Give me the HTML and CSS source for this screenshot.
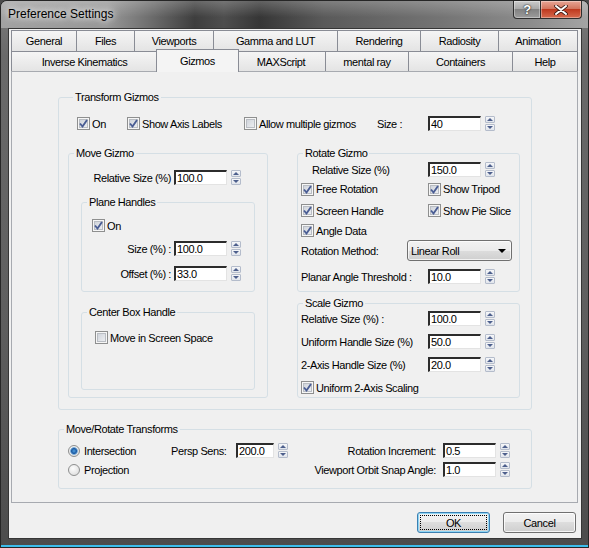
FILE: index.html
```html
<!DOCTYPE html>
<html lang="en">
<head>
    <meta charset="UTF-8">
    <meta name="viewport" content="width=device-width, initial-scale=1.0">
    <title>Preference Settings</title>
    <link rel="stylesheet" href="styles.css">
</head>
<body>
    <div class="window">
        <div class="titlebar">
            <span class="title">Preference Settings</span>
            <div class="caption-buttons">
                <span class="cap-btn help">?</span>
                <span class="cap-btn close">
                    <svg width="14" height="10" viewBox="0 0 14 10">
                        <path d="M2 1 L12 9 M12 1 L2 9" stroke="#3a1a14" stroke-width="3.6" stroke-linecap="round"/>
                        <path d="M2 1 L12 9 M12 1 L2 9" stroke="#fff" stroke-width="2" stroke-linecap="round"/>
                    </svg>
                </span>
            </div>
        </div>

        <div class="client">
            <div class="tabs">
                <div class="tab-row row1">
                    <div class="tab">General</div>
                    <div class="tab">Files</div>
                    <div class="tab">Viewports</div>
                    <div class="tab">Gamma and LUT</div>
                    <div class="tab">Rendering</div>
                    <div class="tab">Radiosity</div>
                    <div class="tab">Animation</div>
                </div>
                <div class="tab-row row2">
                    <div class="tab">Inverse Kinematics</div>
                    <div class="tab active">Gizmos</div>
                    <div class="tab">MAXScript</div>
                    <div class="tab">mental ray</div>
                    <div class="tab">Containers</div>
                    <div class="tab">Help</div>
                </div>
            </div>

            <div class="panel">
                <!-- Transform Gizmos -->
                <div class="group transform">
                    <div class="group-title">Transform Gizmos</div>
                    <div class="top-row">
                        <label class="check w-on"><span class="cb"><svg viewBox="0 0 11 11"><path d="M2 5.5 4.5 8.5 9 2"/></svg></span>On</label>
                        <label class="check w-axis"><span class="cb"><svg viewBox="0 0 11 11"><path d="M2 5.5 4.5 8.5 9 2"/></svg></span>Show Axis Labels</label>
                        <label class="check w-multi"><span class="cb"></span>Allow multiple gizmos</label>
                        <span class="size-label">Size :</span>
                        <span class="num">40</span>
                        <span class="spin"><i></i><i></i></span>
                    </div>

                    <div class="gizmo-cols">
                        <div class="group move">
                            <div class="group-title">Move Gizmo</div>
                            <div class="field">
                                <span class="lbl">Relative Size (%)</span>
                                <span class="num">100.0</span>
                                <span class="spin"><i></i><i></i></span>
                            </div>

                            <div class="group plane">
                                <div class="group-title">Plane Handles</div>
                                <label class="check"><span class="cb"><svg viewBox="0 0 11 11"><path d="M2 5.5 4.5 8.5 9 2"/></svg></span>On</label>
                                <div class="field">
                                    <span class="lbl">Size (%) :</span>
                                    <span class="num">100.0</span>
                                    <span class="spin"><i></i><i></i></span>
                                </div>
                                <div class="field">
                                    <span class="lbl">Offset (%) :</span>
                                    <span class="num">33.0</span>
                                    <span class="spin"><i></i><i></i></span>
                                </div>
                            </div>

                            <div class="group center-box">
                                <div class="group-title">Center Box Handle</div>
                                <label class="check"><span class="cb"></span>Move in Screen Space</label>
                            </div>
                        </div>

                        <div class="right-col">
                            <div class="group rotate">
                                <div class="group-title">Rotate Gizmo</div>
                                <div class="grid">
                                    <span class="lbl indent">Relative Size (%)</span>
                                    <span class="inp"><span class="num">150.0</span><span class="spin"><i></i><i></i></span></span>

                                    <label class="check"><span class="cb"><svg viewBox="0 0 11 11"><path d="M2 5.5 4.5 8.5 9 2"/></svg></span>Free Rotation</label>
                                    <label class="check"><span class="cb"><svg viewBox="0 0 11 11"><path d="M2 5.5 4.5 8.5 9 2"/></svg></span>Show Tripod</label>

                                    <label class="check"><span class="cb"><svg viewBox="0 0 11 11"><path d="M2 5.5 4.5 8.5 9 2"/></svg></span>Screen Handle</label>
                                    <label class="check"><span class="cb"><svg viewBox="0 0 11 11"><path d="M2 5.5 4.5 8.5 9 2"/></svg></span>Show Pie Slice</label>

                                    <label class="check span"><span class="cb"><svg viewBox="0 0 11 11"><path d="M2 5.5 4.5 8.5 9 2"/></svg></span>Angle Data</label>

                                    <div class="method span">
                                        <span class="lbl">Rotation Method:</span>
                                        <div class="combo">Linear Roll<span class="arrow"></span></div>
                                    </div>

                                    <span class="lbl">Planar Angle Threshold :</span>
                                    <span class="inp"><span class="num">10.0</span><span class="spin"><i></i><i></i></span></span>
                                </div>
                            </div>

                            <div class="group scale">
                                <div class="group-title">Scale Gizmo</div>
                                <div class="grid">
                                    <span class="lbl">Relative Size (%) :</span>
                                    <span class="inp"><span class="num">100.0</span><span class="spin"><i></i><i></i></span></span>

                                    <span class="lbl">Uniform Handle Size (%)</span>
                                    <span class="inp"><span class="num">50.0</span><span class="spin"><i></i><i></i></span></span>

                                    <span class="lbl">2-Axis Handle Size (%)</span>
                                    <span class="inp"><span class="num">20.0</span><span class="spin"><i></i><i></i></span></span>

                                    <label class="check span"><span class="cb"><svg viewBox="0 0 11 11"><path d="M2 5.5 4.5 8.5 9 2"/></svg></span>Uniform 2-Axis Scaling</label>
                                </div>
                            </div>
                        </div>
                    </div>
                </div>

                <!-- Move/Rotate Transforms -->
                <div class="group move-rotate">
                    <div class="group-title">Move/Rotate Transforms</div>
                    <div class="mr-grid">
                        <label class="check"><span class="radio on"></span>Intersection</label>
                        <div class="persp">
                            <span class="persp-lbl">Persp Sens:</span>
                            <span class="num short">200.0</span>
                            <span class="spin"><i></i><i></i></span>
                        </div>
                        <span class="rlabel">Rotation Increment:</span>
                        <span class="inp"><span class="num">0.5</span><span class="spin"><i></i><i></i></span></span>

                        <label class="check"><span class="radio"></span>Projection</label>
                        <span></span>
                        <span class="rlabel">Viewport Orbit Snap Angle:</span>
                        <span class="inp"><span class="num">1.0</span><span class="spin"><i></i><i></i></span></span>
                    </div>
                </div>
            </div>

            <div class="dialog-buttons">
                <button class="btn default">OK</button>
                <button class="btn">Cancel</button>
            </div>
        </div>
    </div>
</body>
</html>
```

FILE: styles.css
```css
* {
    box-sizing: border-box;
}

body {
    margin: 0;
    background: #4a4a4a;
    font-family: "Liberation Sans", Arial, sans-serif;
    font-size: 11px;
    letter-spacing: -0.4px;
    color: #000;
}

.window {
    width: 589px;
    height: 548px;
    display: flex;
    flex-direction: column;
    border: 1px solid #262626;
    border-radius: 7px 7px 0 0;
    overflow: hidden;
    background: linear-gradient(180deg, #7c7c7c 0%, #6a6a6a 10%, #5e5e5e 60%, #4c4c4c 100%);
    box-shadow: inset 0 -2px 0 #3cbdec;
}

/* title bar */
.titlebar {
    height: 27px;
    flex: none;
    display: flex;
    justify-content: space-between;
    align-items: flex-start;
    padding-left: 7px;
    background:
        linear-gradient(180deg, rgba(255,255,255,0.22), rgba(255,255,255,0) 60%),
        linear-gradient(90deg, #a2a2a2 0%, #989898 18%, #707070 25%, #3e3e3e 33%, #4e4e4e 38%, #363636 44%, #5a5a5a 55%, #747474 75%, #8c8c8c 90%, #a4a4a4 100%);
}

.title {
    line-height: 27px;
    font-size: 12px;
    letter-spacing: 0;
    text-shadow: 0 0 6px #fff, 0 0 10px rgba(255,255,255,0.8);
}

.caption-buttons {
    display: flex;
    margin-right: 6px;
}

.cap-btn {
    height: 18px;
    display: flex;
    align-items: center;
    justify-content: center;
    border: 1px solid #2e2e2e;
    border-top: none;
    box-shadow: inset 0 0 0 1px rgba(255,255,255,0.35);
}

.help {
    width: 28px;
    border-radius: 0 0 0 4px;
    background: linear-gradient(#cbcbcb, #a9a9a9 45%, #828282 50%, #9c9c9c);
    color: #fff;
    font-weight: bold;
    font-size: 13px;
    text-shadow: 0 0 2px #222, 0 0 1px #222;
}

.close {
    width: 41px;
    border-left: none;
    border-radius: 0 0 4px 0;
    background: linear-gradient(#e8a696, #d3765f 45%, #bf3a1f 50%, #d66a4e);
}

/* client area */
.client {
    flex: 1;
    margin: 0 6px 8px 7px;
    padding: 1px 3px 0 2px;
    display: flex;
    flex-direction: column;
    background: #f0f0f0;
    border: 1px solid #363636;
}

.tab-row {
    display: grid;
    height: 21px;
}

.row1 {
    grid-template-columns: 66px 58px 79px 124px 83px 78px 79px;
}

.row2 {
    height: 20px;
    grid-template-columns: 147px 79px 89px 83px 104px 65px;
}

.tab {
    display: flex;
    align-items: center;
    justify-content: center;
    border: 1px solid #898c95;
    border-left: none;
    border-bottom: none;
    background: linear-gradient(#f5f5f5, #e4e4e4);
}

.tab:first-child {
    border-left: 1px solid #898c95;
}

.tab.active {
    position: relative;
    z-index: 1;
    margin: -2px -2px -1px -2px;
    border-left: 1px solid #898c95;
    background: #f4f4f4;
}

.panel {
    height: 432px;
    flex: none;
    border: 1px solid #a7aab0;
    padding: 25px 0 0 46px;
}

/* group boxes */
.group {
    border: 1px solid #d5dfe5;
    border-radius: 3px;
}

.group-title {
    width: fit-content;
    margin: -7px 0 0 5px;
    padding: 0 2px;
    line-height: 13px;
    background: #f0f0f0;
    white-space: nowrap;
}

.transform {
    width: 474px;
    padding: 0 0 11px 9px;
}

.top-row {
    display: flex;
    align-items: center;
    height: 15px;
    margin-top: 12px;
    padding-left: 9px;
}

.w-on { width: 50px; }
.w-axis { width: 117px; }
.w-multi { width: 133px; }
.size-label { width: 51px; }

.gizmo-cols {
    display: flex;
    align-items: flex-start;
    gap: 29px;
    margin-top: 22px;
}

/* controls */
.check {
    display: flex;
    align-items: center;
    gap: 2px;
    white-space: nowrap;
}

.cb {
    width: 13px;
    height: 13px;
    flex: none;
    border: 1px solid #8e8f8f;
    background: linear-gradient(135deg, #c9ced6, #f3f4f6);
    box-shadow: inset 0 0 0 1px #f6f6f6, inset 0 0 0 2px #b9bdc3;
}

.cb svg {
    display: block;
    width: 11px;
    height: 11px;
}

.cb path {
    fill: none;
    stroke: #4a5d94;
    stroke-width: 1.9;
}

.radio {
    width: 12px;
    height: 12px;
    flex: none;
    border: 1px solid #8e8f8f;
    border-radius: 50%;
    background: radial-gradient(circle at 40% 35%, #fdfdfd, #d8d8d8);
}

.radio.on {
    background:
        radial-gradient(circle, #4fa0e0 0, #1d5aa3 2.5px, #7eaed8 3.5px, rgba(255,255,255,0) 4.2px),
        radial-gradient(circle at 40% 35%, #fdfdfd, #d8d8d8);
}

.field {
    display: flex;
    align-items: center;
    height: 15px;
}

.lbl {
    white-space: nowrap;
}

.num {
    width: 53px;
    height: 15px;
    flex: none;
    padding-left: 1px;
    line-height: 12px;
    background: #fff;
    border-style: solid;
    border-width: 2px 1px 1px 2px;
    border-color: #2c2c2c #e3e3e3 #e3e3e3 #2c2c2c;
}

.num.short {
    width: 38px;
}

.inp {
    display: flex;
    align-items: center;
}

.spin {
    width: 10px;
    height: 15px;
    flex: none;
    margin-left: 4px;
    display: flex;
    flex-direction: column;
    gap: 1px;
}

.spin i {
    flex: 1;
    display: flex;
    align-items: center;
    justify-content: center;
    border: 1px solid #b4bccb;
    border-radius: 1px;
    background: linear-gradient(#f6f7f9, #e1e5ec);
}

.spin i::after {
    content: "";
    border-left: 3px solid transparent;
    border-right: 3px solid transparent;
}

.spin i:first-child::after {
    border-bottom: 3px solid #4d5f8c;
}

.spin i:last-child::after {
    border-top: 3px solid #4d5f8c;
}

.combo {
    width: 105px;
    height: 21px;
    display: flex;
    align-items: center;
    justify-content: space-between;
    padding: 0 5px 0 3px;
    border: 1px solid #707070;
    border-radius: 3px;
    background: linear-gradient(#f2f2f2, #ebebeb 50%, #dddddd 50%, #cfcfcf);
    box-shadow: inset 0 0 0 1px rgba(255,255,255,0.7);
}

.arrow {
    border-left: 4px solid transparent;
    border-right: 4px solid transparent;
    border-top: 4px solid #000;
}

/* move gizmo */
.move {
    width: 200px;
    height: 245px;
}

.move > .field {
    margin-top: 10px;
}

.move .lbl {
    width: 102px;
    margin-right: 3px;
    text-align: right;
}

.plane {
    width: 174px;
    height: 90px;
    margin: 17px 0 0 12px;
}

.plane > .check {
    height: 13px;
    margin: 10px 0 0 10px;
}

.plane > .field {
    margin-top: 9px;
}

.plane > .field + .field {
    margin-top: 10px;
}

.plane .lbl {
    width: 89px;
}

.center-box {
    width: 174px;
    height: 78px;
    margin: 20px 0 0 12px;
}

.center-box > .check {
    margin: 12px 0 0 13px;
}

/* rotate / scale */
.right-col {
    width: 223px;
    display: flex;
    flex-direction: column;
    gap: 11px;
}

.rotate {
    height: 139px;
}

.scale {
    height: 95px;
}

.right-col .grid {
    display: grid;
    grid-template-columns: 127px 1fr;
    align-items: center;
    padding-left: 3px;
}

.rotate .grid {
    grid-template-rows: 19px 20px 23px 17px 23px 29px;
}

.scale .grid {
    grid-template-rows: repeat(4, 15px);
    row-gap: 8px;
    padding-top: 1px;
}

.span {
    grid-column: 1 / -1;
}

.indent {
    padding-left: 11px;
}

.method {
    display: flex;
    align-items: center;
}

.method .lbl {
    width: 106px;
}

/* move/rotate transforms */
.move-rotate {
    width: 474px;
    height: 60px;
    margin-top: 19px;
}

.mr-grid {
    display: grid;
    grid-template-columns: 103px 134px 138px auto;
    grid-template-rows: 19px 19px;
    align-items: center;
    padding: 5px 0 0 9px;
}

.mr-grid .check {
    gap: 4px;
}

.persp {
    display: flex;
    align-items: center;
}

.persp-lbl {
    width: 65px;
    white-space: nowrap;
}

.rlabel {
    text-align: right;
    padding-right: 7px;
    white-space: nowrap;
}

/* dialog buttons */
.dialog-buttons {
    display: flex;
    justify-content: flex-end;
    gap: 13px;
    margin: 9px 2px 0 0;
}

.btn {
    width: 73px;
    height: 21px;
    padding: 0;
    font: inherit;
    letter-spacing: inherit;
    color: #000;
    border: 1px solid #707070;
    border-radius: 3px;
    background: linear-gradient(#f2f2f2, #ebebeb 50%, #dddddd 50%, #cfcfcf);
    box-shadow: inset 0 0 0 1px rgba(255,255,255,0.8);
}

.btn.default {
    border-color: #3c7fb1;
    box-shadow: inset 0 0 0 1px #8fd6f5;
    outline: 1px dotted #000;
    outline-offset: -4px;
}
```
